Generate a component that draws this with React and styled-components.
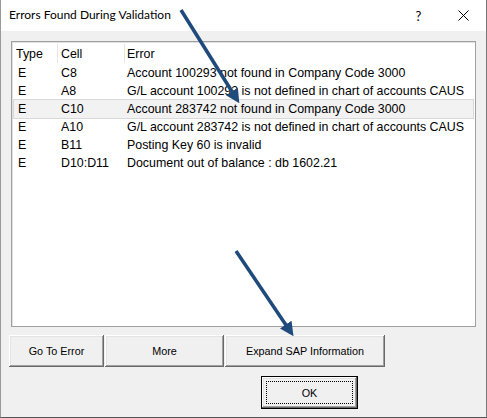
import React from "react";
import styled, { createGlobalStyle } from "styled-components";

const Global = createGlobalStyle`
  html, body { margin: 0; padding: 0; background: #fff; }
  * { box-sizing: border-box; }
`;

const Window = styled.div`
  position: relative;
  width: 487px;
  height: 418px;
  background: #f0f0f0;
  border-left: 1px solid #9a9a9a;
  border-right: 1px solid #777;
  border-bottom: 1px solid #555;
  display: flex;
  flex-direction: column;
  font-family: "DejaVu Sans", Tahoma, sans-serif;
`;

const TitleBar = styled.div`
  height: 31px;
  background: #fff;
  display: flex;
  align-items: center;
  padding-left: 8px;
  font-family: "Lato", "Segoe UI", sans-serif;
  font-size: 12px;
  color: #000;
`;

const Title = styled.div`
  flex: 1;
  padding-bottom: 2px;
`;

const TitleButton = styled.div`
  width: 45px;
  height: 31px;
  display: flex;
  align-items: center;
  justify-content: center;
  font-size: 13px;
`;

const Body = styled.div`
  flex: 1;
  display: flex;
  flex-direction: column;
  padding: 10px 11px 0 10px;
`;

const ListBox = styled.div`
  width: 465px;
  height: 286px;
  background: #fff;
  border: 1px solid #a0a0a0;
  box-shadow: inset 1px 1px 0 #e0e0e0;
  font-family: "Liberation Sans", Tahoma, sans-serif;
  font-size: 12.4px;
  color: #000;
  padding: 1px;
`;

const Grid = styled.div`
  display: grid;
  grid-template-columns: 44px 67px 1fr;
  align-items: center;
  border: 1px solid ${p => (p.$selected ? "#d9d9d9" : "transparent")};
  background: ${p => (p.$selected ? "#f2f2f2" : "transparent")};
  margin-top: ${p => (p.$selected ? "-1px" : "0")};
  margin-bottom: ${p => (p.$selected ? "-1px" : "0")};
  height: ${p => (p.$header ? "21px" : p.$selected ? "20px" : "18px")};
`;

const HeadCell = styled.div`
  padding-left: ${p => p.$pad}px;
  height: 100%;
  display: flex;
  align-items: center;
  border-right: ${p => (p.$sep ? "1px solid #e5e5e5" : "none")};
  white-space: nowrap;
`;

const Cell = styled.div`
  padding-left: ${p => p.$pad}px;
  white-space: nowrap;
`;

const ButtonRow = styled.div`
  display: flex;
  margin-top: 8px;
  margin-left: -2px;
`;

const Button = styled.div`
  width: ${p => p.$w}px;
  height: 32px;
  background: #f0f0f0;
  display: flex;
  align-items: center;
  justify-content: center;
  font-family: "Liberation Sans", Tahoma, sans-serif;
  font-size: 10.8px;
  color: #000;
  margin-right: 1px;
  box-shadow: inset -1px -1px 0 #696969, inset 1px 1px 0 #ffffff,
    inset -2px -2px 0 #a0a0a0, inset 2px 2px 0 #e3e3e3;
`;

const OkRow = styled.div`
  display: flex;
  padding-left: 250px;
  margin-top: 9px;
`;

const OkButton = styled(Button)`
  width: 97px;
  height: 33px;
  border: 1px solid #000;
  position: relative;
  &::after {
    content: "";
    position: absolute;
    left: 4px;
    top: 4px;
    right: 4px;
    bottom: 4px;
    border: 1px dotted #000;
  }
`;

const Overlay = styled.svg`
  position: absolute;
  left: -1px;
  top: 0;
  pointer-events: none;
`;

const rows = [
  ["E", "C8", "Account 100293 not found in Company Code 3000"],
  ["E", "A8", "G/L account 100293 is not defined in chart of accounts CAUS"],
  ["E", "C10", "Account 283742 not found in Company Code 3000", true],
  ["E", "A10", "G/L account 283742 is not defined in chart of accounts CAUS"],
  ["E", "B11", "Posting Key 60 is invalid"],
  ["E", "D10:D11", "Document out of balance : db 1602.21"],
];

export default function App() {
  return (
    <>
      <Global />
      <Window>
        <TitleBar>
          <Title>Errors Found During Validation</Title>
          <TitleButton>?</TitleButton>
          <TitleButton>
            <svg width="11" height="11" viewBox="0 0 11 11">
              <path d="M0.5 0.5 L10.5 10.5 M10.5 0.5 L0.5 10.5" stroke="#000" strokeWidth="1" />
            </svg>
          </TitleButton>
        </TitleBar>
        <Body>
          <ListBox>
            <Grid $header>
              <HeadCell $pad={2} $sep>Type</HeadCell>
              <HeadCell $pad={3} $sep>Cell</HeadCell>
              <HeadCell $pad={2}>Error</HeadCell>
            </Grid>
            {rows.map(([t, c, e, sel]) => (
              <Grid key={c} $selected={sel}>
                <Cell $pad={4}>{t}</Cell>
                <Cell $pad={3}>{c}</Cell>
                <Cell $pad={2}>{e}</Cell>
              </Grid>
            ))}
          </ListBox>
          <ButtonRow>
            <Button $w={95}>Go To Error</Button>
            <Button $w={119}>More</Button>
            <Button $w={160}>Expand SAP Information</Button>
          </ButtonRow>
          <OkRow>
            <OkButton>OK</OkButton>
          </OkRow>
        </Body>
        <Overlay width="487" height="418" viewBox="0 0 487 418">
          <defs>
            <marker id="ah" markerWidth="4" markerHeight="4" refX="2.2" refY="2" orient="auto" markerUnits="strokeWidth">
              <path d="M0 0 L4 2 L0 4 Z" fill="#1f4a7c" />
            </marker>
          </defs>
          <line x1="181" y1="10" x2="236" y2="98" stroke="#1f4a7c" strokeWidth="3.5" markerEnd="url(#ah)" />
          <line x1="236" y1="251" x2="290" y2="331" stroke="#1f4a7c" strokeWidth="3.5" markerEnd="url(#ah)" />
        </Overlay>
      </Window>
    </>
  );
}
